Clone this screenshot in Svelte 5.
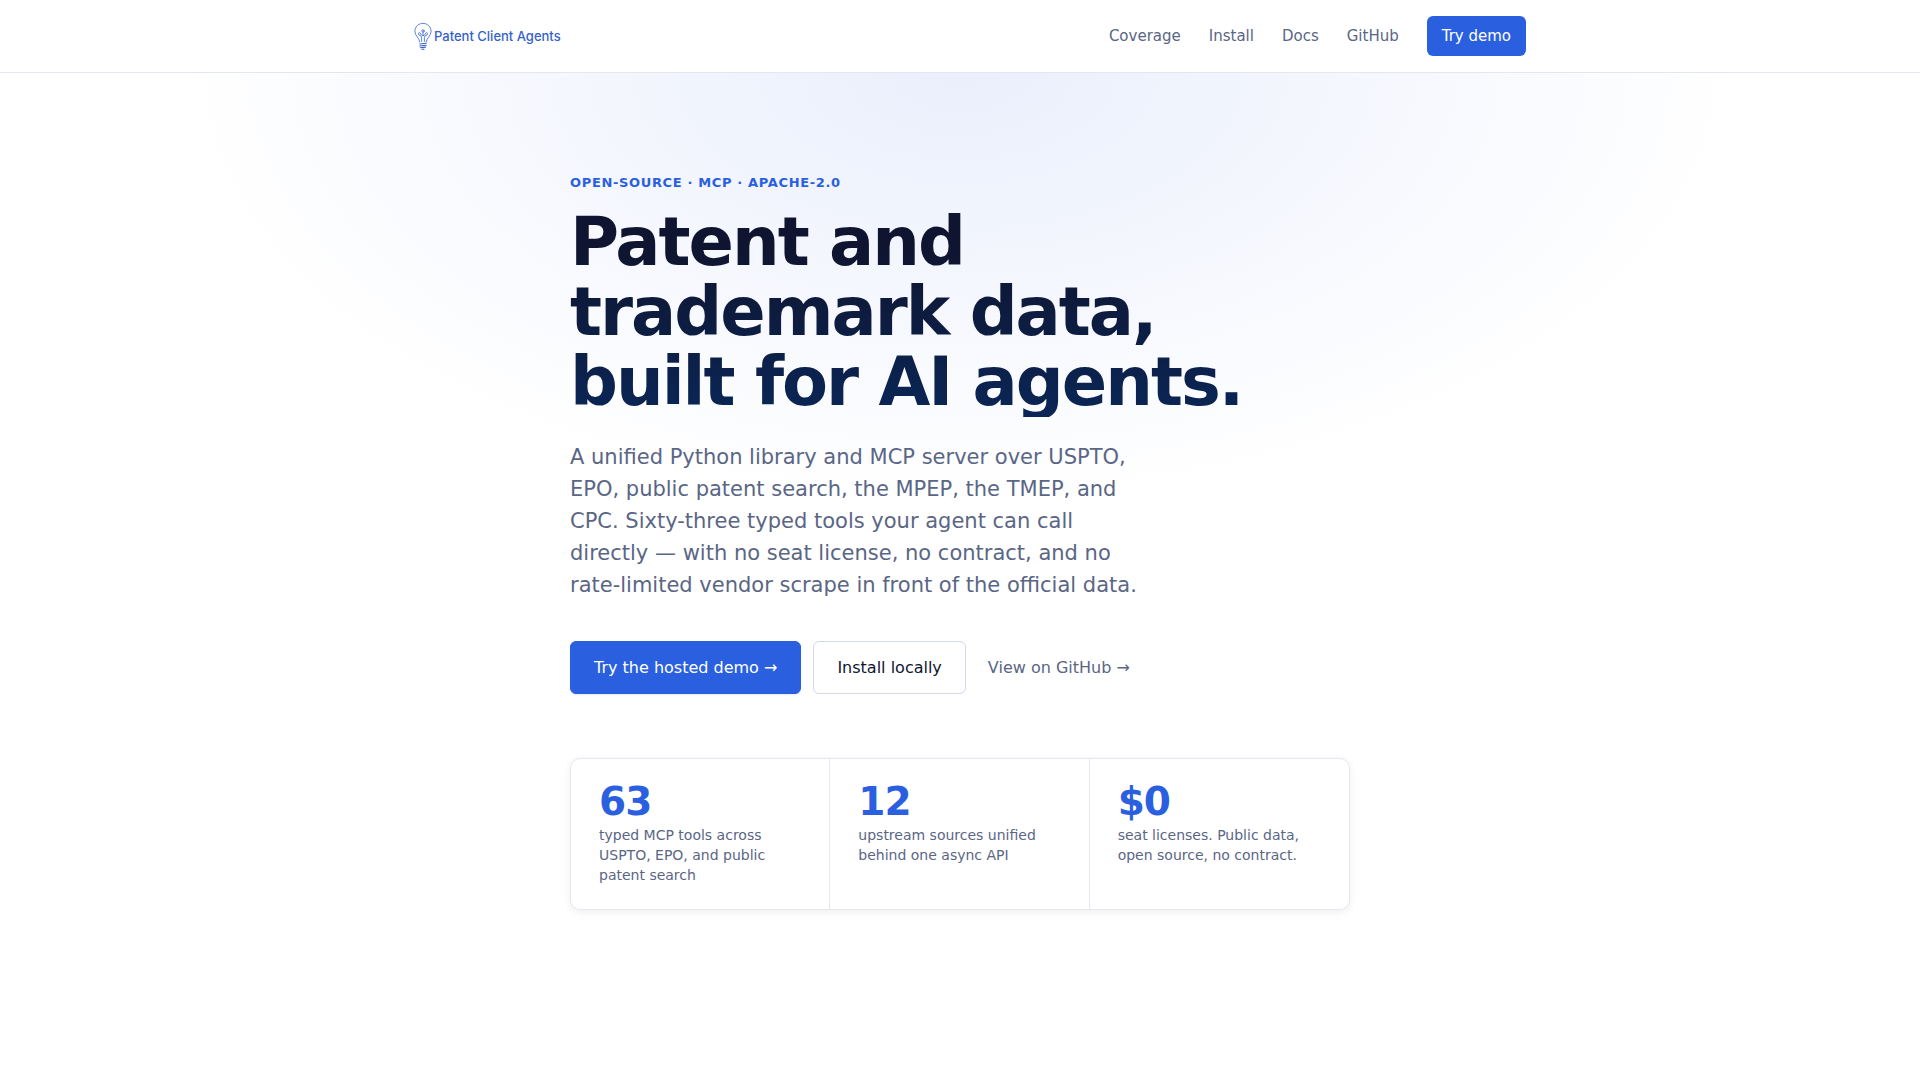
<script>
    const navLinks = [
        { label: 'Coverage', href: '#coverage' },
        { label: 'Install', href: '#install' },
        { label: 'Docs', href: '#docs' },
        { label: 'GitHub', href: '#github' }
    ];

    const stats = [
        { value: '63', label: 'typed MCP tools across USPTO, EPO, and public patent search' },
        { value: '12', label: 'upstream sources unified behind one async API' },
        { value: '$0', label: 'seat licenses. Public data, open source, no contract.' }
    ];
</script>

<header class="site-header">
    <div class="header-inner">
        <a class="brand" href="#top">
            <svg class="bulb" viewBox="0 0 18 28" fill="none" stroke="currentColor" stroke-width="0.8" stroke-linecap="round" aria-hidden="true">
                <path d="M5.8 20C5.6 16 0.9 14 0.9 9.2C0.9 4.8 4.5 1.4 9 1.4s8.1 3.4 8.1 7.8c0 4.8-4.7 6.8-4.9 10.8" />
                <path d="M7.6 19.4V15.2C7.6 13.4 4.4 13.8 4.4 11.8a1.1 1.1 0 1 1 2.2 0c0 .8.8 1.4 2.4 1.8c1.6-.4 2.4-1 2.4-1.8a1.1 1.1 0 1 1 2.2 0c0 2-3.2 1.6-3.2 3.4v4.2" />
                <path d="M9 13.6V10.4" />
                <circle cx="9" cy="9" r="1.2" />
                <path d="M5.8 22l6.4-.8M5.8 24l6.4-.8M6.4 25.8l5.2-.7M8 27.2h2" stroke-width="1.1" />
            </svg>
            <span>Patent Client Agents</span>
        </a>
        <nav class="nav">
            {#each navLinks as link}
                <a href={link.href}>{link.label}</a>
            {/each}
            <a class="nav-cta" href="#demo">Try demo</a>
        </nav>
    </div>
</header>

<main class="hero">
    <div class="hero-inner">
        <p class="eyebrow">Open-source · MCP · Apache-2.0</p>
        <h1>Patent and trademark data, built for AI agents.</h1>
        <p class="lede">
            A unified Python library and MCP server over USPTO, EPO, public patent search, the MPEP,
            the TMEP, and CPC. Sixty-three typed tools your agent can call directly — with no seat
            license, no contract, and no rate-limited vendor scrape in front of the official data.
        </p>
        <div class="actions">
            <a class="btn primary" href="#demo">Try the hosted demo →</a>
            <a class="btn secondary" href="#install">Install locally</a>
            <a class="btn ghost" href="#github">View on GitHub →</a>
        </div>
        <div class="stats">
            {#each stats as stat}
                <div class="stat">
                    <div class="stat-value">{stat.value}</div>
                    <div class="stat-label">{stat.label}</div>
                </div>
            {/each}
        </div>
    </div>
</main>

<style>
    :global(body) {
        background: #fff;
        color: #0f1530;
        font-family: 'DejaVu Sans', Verdana, sans-serif;
        font-size: 16px;
        line-height: 25px;
    }

    a {
        color: inherit;
        text-decoration: none;
    }

    .site-header {
        background: #fff;
        border-bottom: 1px solid #e4e7f0;
    }

    .header-inner {
        box-sizing: border-box;
        max-width: 1180px;
        margin: 0 auto;
        padding: 16px 24px;
        display: flex;
        align-items: center;
        justify-content: space-between;
    }

    .brand {
        display: flex;
        align-items: center;
        gap: 2px;
        padding-left: 20px;
        color: #3562c8;
        font-family: Inter, sans-serif;
        font-size: 13px;
        font-weight: 500;
        line-height: 28px;
    }

    .bulb {
        width: 18px;
        height: 28px;
    }

    .nav {
        display: flex;
        align-items: center;
        gap: 28px;
        color: #5a6685;
        font-size: 15px;
        line-height: 24px;
    }

    .nav-cta {
        padding: 8px 15px;
        border-radius: 6px;
        background: #2a60e0;
        color: #fff;
    }

    .hero {
        padding: 100px 24px 168px;
        background: radial-gradient(ellipse 780px 430px at 50% 0, #eaeffc, rgba(234, 239, 252, 0));
    }

    .hero-inner {
        max-width: 780px;
        margin: 0 auto;
    }

    .eyebrow {
        margin: 0 0 14px;
        color: #2a60e0;
        font-size: 13px;
        font-weight: 700;
        letter-spacing: 0.05em;
        line-height: 20px;
        text-transform: uppercase;
    }

    h1 {
        max-width: 720px;
        margin: 0 0 24px;
        background: linear-gradient(180deg, #0f1530 20%, #0a2656);
        background-clip: text;
        color: transparent;
        font-size: 67px;
        font-weight: 700;
        letter-spacing: -2px;
        line-height: 70px;
    }

    .lede {
        max-width: 580px;
        margin: 0 0 40px;
        color: #5a6685;
        font-size: 21px;
        line-height: 32px;
    }

    .actions {
        display: flex;
        flex-wrap: wrap;
        gap: 12px;
        margin-bottom: 64px;
    }

    .btn {
        padding: 13px 23px;
        border: 1px solid transparent;
        border-radius: 6px;
    }

    .primary {
        border-color: #2a60e0;
        background: #2a60e0;
        box-shadow: 0 1px 2px rgba(15, 21, 48, 0.1);
        color: #fff;
    }

    .secondary {
        border-color: #d3d9ea;
        background: #fff;
    }

    .ghost {
        padding: 13px 9px;
        color: #5a6685;
    }

    .stats {
        display: grid;
        grid-template-columns: repeat(3, 1fr);
        overflow: hidden;
        border: 1px solid #e4e7f0;
        border-radius: 10px;
        background: #fff;
        box-shadow: 0 2px 8px rgba(15, 21, 48, 0.07);
    }

    .stat {
        padding: 24px 28px;
        border-right: 1px solid #e4e7f0;
    }

    .stat:last-child {
        border-right: none;
    }

    .stat-value {
        margin-bottom: 4px;
        color: #2a60e0;
        font-size: 39px;
        font-weight: 700;
        letter-spacing: -1px;
        line-height: 38px;
    }

    .stat-label {
        color: #5a6685;
        font-size: 14px;
        line-height: 20px;
    }
</style>
